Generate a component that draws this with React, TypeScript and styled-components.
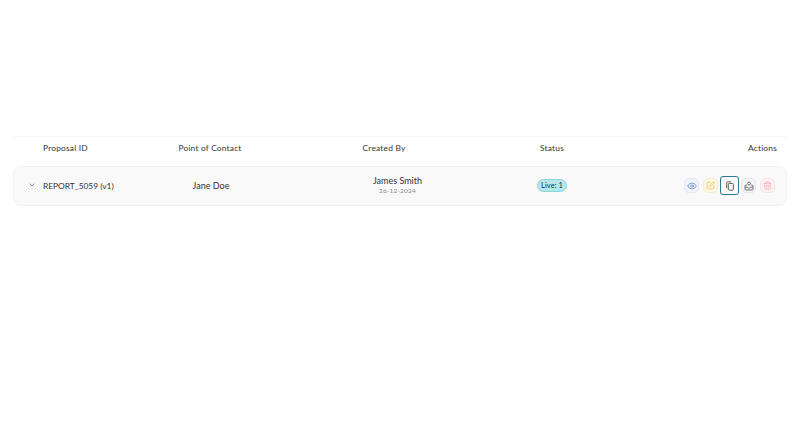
import React from "react";
import styled, { createGlobalStyle } from "styled-components";
import { ChevronDown, Eye, SquarePen, Trash2 } from "lucide-react";

const GlobalStyle = createGlobalStyle`
  html, body {
    margin: 0;
    background: #fff;
    font-family: "Lato", "Inter", sans-serif;
  }
`;

const columns = "100px 134px 214px 122px 164px";

function TrayPerson() {
  return (
    <svg width="10" height="10" viewBox="0 0 24 24" fill="none" stroke="currentColor" strokeWidth="2.2">
      <circle cx="12" cy="6" r="3.5" />
      <path d="M7 10H4a1.5 1.5 0 0 0-1.5 1.5V20A1.5 1.5 0 0 0 4 21.5h16a1.5 1.5 0 0 0 1.5-1.5v-8.500A1.500 1.500 0 0 0 20 10h-3" />
      <path d="M3 15h5l2 2h4l2-2h5" />
    </svg>
  );
}

function Sheets() {
  return (
    <svg width="10" height="10" viewBox="0 0 24 24" fill="none" stroke="currentColor" strokeWidth="2.2">
      <rect x="8" y="6" width="12" height="16" rx="2" />
      <path d="M4 17V4a2 2 0 0 1 2-2h9" />
    </svg>
  );
}

const Icons = [
  { id: "view", icon: <Eye size={10} />, color: "#6f8fd6", bg: "#f1f4fb", line: "#e2e8f5" },
  { id: "edit", icon: <SquarePen size={9} />, color: "#ecc667", bg: "#fdf7e8", line: "#f7eed6" },
  { id: "copy", icon: <Sheets />, color: "#555", bg: "#f8f8f8", line: "#f8f8f8", focus: true },
  { id: "send", icon: <TrayPerson />, color: "#666", bg: "#f5f5f5", line: "#e6e6e6" },
  { id: "delete", icon: <Trash2 size={9} />, color: "#f0a8b2", bg: "#fdf1f3", line: "#f8e4e7" },
];

export default function App() {
  return (
    <Page>
      <GlobalStyle />
      <Table>
        <HeaderRow>
          <HeadCell>Proposal ID</HeadCell>
          <HeadCell $center>Point of Contact</HeadCell>
          <HeadCell $center>Created By</HeadCell>
          <HeadCell $center>Status</HeadCell>
          <HeadCell $right>Actions</HeadCell>
        </HeaderRow>
        <Row>
          <Expand>
            <ChevronDown size={8} strokeWidth={2.5} />
          </Expand>
          <IdCell>REPORT_5059 (v1)</IdCell>
          <Contact>Jane Doe</Contact>
          <Creator>
            <span>James Smith</span>
            <small>26-12-2024</small>
          </Creator>
          <Cell>
            <Badge>Live: 1</Badge>
          </Cell>
          <Actions>
            {Icons.map((a) => (
              <ActionButton key={a.id} $color={a.color} $bg={a.bg} $line={a.line} $focus={a.focus}>
                {a.icon}
              </ActionButton>
            ))}
          </Actions>
        </Row>
      </Table>
    </Page>
  );
}

const Page = styled.div`
  width: 801px;
  height: 441px;
  padding: 136px 14px 0 13px;
  box-sizing: border-box;
  overflow: hidden;
`;

const Table = styled.div`
  width: 774px;
`;

const HeaderRow = styled.div`
  display: grid;
  grid-template-columns: ${columns};
  align-items: start;
  height: 30px;
  padding: 6px 10px 0 30px;
  box-sizing: border-box;
  border-top: 1px solid #f5f5f5;
`;

const HeadCell = styled.div<{ $center?: boolean; $right?: boolean }>`
  font-size: 8.4px;
  line-height: 11px;
  letter-spacing: 0.2px;
  color: #333;
  text-align: ${(p) => (p.$right ? "right" : p.$center ? "center" : "left")};
`;

const Row = styled.div`
  position: relative;
  display: grid;
  grid-template-columns: ${columns};
  align-items: center;
  height: 40px;
  padding: 0 9px 1px 29px;
  box-sizing: border-box;
  background: #f9f9f9;
  border: 1px solid #f2f2f2;
  border-radius: 8px;
`;

const Expand = styled.span`
  position: absolute;
  left: 14px;
  top: 14px;
  display: flex;
  color: #777;
`;

const Cell = styled.div`
  font-size: 9px;
  color: #333;
  text-align: center;
`;

const Contact = styled(Cell)`
  padding-left: 2px;
`;

const IdCell = styled(Cell)`
  font-size: 8.4px;
  text-align: left;
  white-space: nowrap;
`;

const Creator = styled(Cell)`
  display: flex;
  flex-direction: column;
  padding: 0 0 1px 27px;
  line-height: 10px;
  small {
    font-size: 6.5px;
    line-height: 9px;
    color: #888;
    letter-spacing: 0.2px;
  }
`;

const Badge = styled.span`
  display: inline-block;
  padding: 0 3.5px;
  font-size: 7.6px;
  line-height: 11px;
  color: #1d3b45;
  background: #b4e6ea;
  border: 1px solid #8fd3da;
  border-radius: 7px;
`;

const Actions = styled.div`
  display: flex;
  justify-content: flex-end;
  align-items: center;
  gap: 4px;
  margin-right: 2px;
`;

const ActionButton = styled.button<{ $color: string; $bg: string; $line: string; $focus?: boolean }>`
  position: relative;
  display: flex;
  align-items: center;
  justify-content: center;
  padding: 0;
  width: 15px;
  height: 15px;
  color: ${(p) => p.$color};
  background: ${(p) => p.$bg};
  border: 1px solid ${(p) => p.$line};
  border-radius: 5px;
  &::after {
    content: "";
    display: ${(p) => (p.$focus ? "block" : "none")};
    position: absolute;
    inset: -3px;
    border: 1.5px solid #2b7a90;
    border-radius: 3px;
  }
`;
